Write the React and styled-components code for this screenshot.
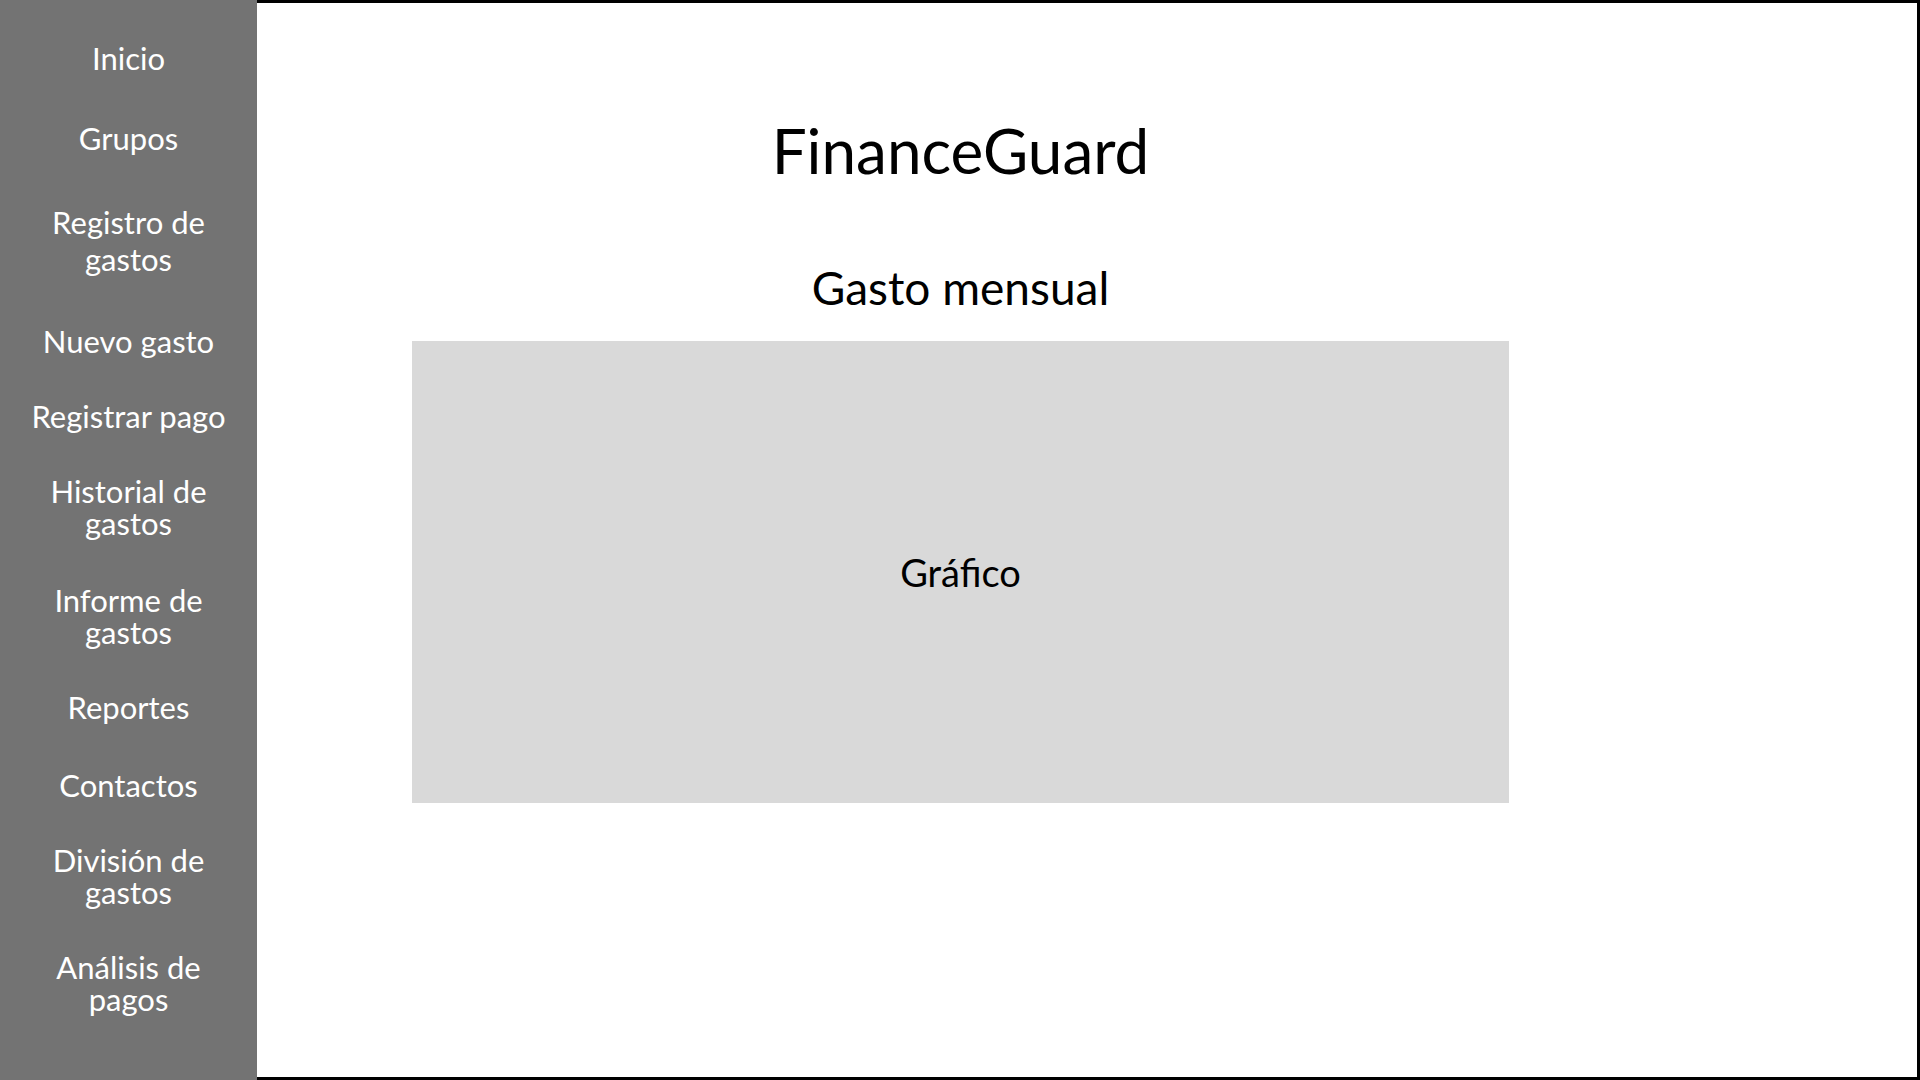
import React from "react";
import styled, { createGlobalStyle } from "styled-components";

const Global = createGlobalStyle`
  html, body { margin: 0; padding: 0; background: #ffffff; }
  body { font-family: Lato, "Open Sans", sans-serif; }
  * { box-sizing: border-box; }
`;

const Page = styled.div`
  display: flex;
  width: 1920px;
  height: 1080px;
  overflow: hidden;
`;

const Sidebar = styled.nav`
  width: 257px;
  flex-shrink: 0;
  height: 100%;
  background: #737373;
  display: flex;
  flex-direction: column;
  align-items: center;
  padding-top: 42px;
`;

const NavItem = styled.a`
  display: block;
  width: 100%;
  text-align: center;
  color: #ffffff;
  font-size: 31px;
  line-height: ${(p) => p.$lh || 32}px;
  text-decoration: none;
  margin-top: ${(p) => p.$mt ?? 44}px;
  &:first-child { margin-top: 0; }
`;

const Main = styled.main`
  flex: 1;
  height: 100%;
  border-top: 3px solid #000;
  border-right: 3px solid #000;
  border-bottom: 3px solid #000;
  background: #fff;
  padding-left: 155px;
`;

const Content = styled.section`
  width: 1097px;
  display: flex;
  flex-direction: column;
  align-items: center;
`;

const Title = styled.h1`
  margin: 109px 0 0;
  font-size: 62px;
  font-weight: 400;
  line-height: 76px;
  color: #000;
`;

const Subtitle = styled.h2`
  margin: 72px 0 0;
  font-size: 46px;
  font-weight: 400;
  line-height: 56px;
  color: #000;
`;

const ChartBox = styled.div`
  margin-top: 25px;
  width: 1097px;
  height: 462px;
  background: #d9d9d9;
  display: flex;
  align-items: center;
  justify-content: center;
  font-size: 38px;
  color: #000;
`;

const items = [
  { label: "Inicio" },
  { label: "Grupos", mt: 48 },
  { label: ["Registro de", "gastos"], mt: 50, lh: 37 },
  { label: "Nuevo gasto", mt: 47 },
  { label: "Registrar pago", mt: 43 },
  { label: ["Historial de", "gastos"], mt: 43 },
  { label: ["Informe de", "gastos"], mt: 45 },
  { label: "Reportes", mt: 43 },
  { label: "Contactos", mt: 46 },
  { label: ["División de", "gastos"], mt: 43 },
  { label: ["Análisis de", "pagos"], mt: 43 },
];

export default function App() {
  return (
    <>
      <Global />
      <Page>
        <Sidebar>
          {items.map((it, i) => (
            <NavItem key={i} href="#" $mt={it.mt} $lh={it.lh}>
              {Array.isArray(it.label) ? (
                <>
                  {it.label[0]}
                  <br />
                  {it.label[1]}
                </>
              ) : (
                it.label
              )}
            </NavItem>
          ))}
        </Sidebar>
        <Main>
          <Content>
            <Title>FinanceGuard</Title>
            <Subtitle>Gasto mensual</Subtitle>
            <ChartBox>Gráfico</ChartBox>
          </Content>
        </Main>
      </Page>
    </>
  );
}
